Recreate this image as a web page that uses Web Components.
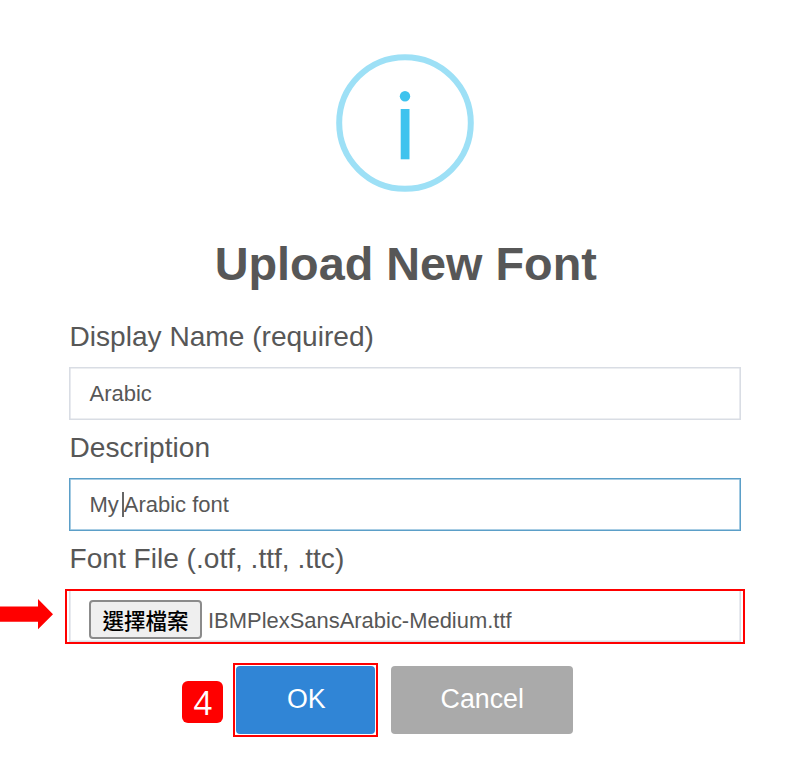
<!DOCTYPE html>
<html lang="zh-Hant">
<head>
<meta charset="utf-8">
<title>Upload New Font</title>
<style>
  body { margin: 0; background: #fff; font-family: "Liberation Sans", Arial, "Noto Sans CJK TC", sans-serif; overflow: hidden; }
</style>
</head>
<body>
<font-dialog>
  <info-icon slot="icon"></info-icon>
  <span slot="title">Upload New Font</span>
  <form-field label="Display Name (required)">Arabic</form-field>
  <form-field label="Description" active>My<text-caret></text-caret> Arabic font</form-field>
  <form-field label="Font File (.otf, .ttf, .ttc)" file><file-picker button="選擇檔案">IBMPlexSansArabic-Medium.ttf</file-picker><pointer-frame></pointer-frame></form-field>
  <dialog-button slot="actions" kind="ok">OK<step-mark>4</step-mark></dialog-button>
  <dialog-button slot="actions" kind="cancel">Cancel</dialog-button>
</font-dialog>
<script>
const define = (name, html) => {
  const template = document.createElement('template');
  template.innerHTML = html;
  customElements.define(name, class extends HTMLElement {
    constructor() {
      super();
      this.attachShadow({ mode: 'open' }).append(template.content.cloneNode(true));
    }
    connectedCallback() {
      this.shadowRoot.querySelectorAll('[data-text]').forEach(el => {
        el.textContent = this.getAttribute(el.dataset.text);
      });
    }
  });
};

define('font-dialog', `
  <style>
    :host { display: flex; flex-direction: column; box-sizing: border-box; width: 792px; height: 761px; padding: 54px 51.5px 0 69px; color: #575757; background: #fff; }
    header { display: flex; flex-direction: column; align-items: center; }
    h1 { margin: 44px 0 16px; padding-left: 2px; font-size: 46.8px; line-height: 57px; font-weight: 700; white-space: nowrap; }
    footer { display: flex; justify-content: center; gap: 16px; padding-top: 24px; }
  </style>
  <header><slot name="icon"></slot><h1><slot name="title"></slot></h1></header>
  <main><slot></slot></main>
  <footer><slot name="actions"></slot></footer>`);

define('info-icon', `
  <style>:host { display: block; width: 138px; height: 138px; } svg { display: block; }</style>
  <svg width="138" height="138" viewBox="0 0 138 138">
    <circle cx="69" cy="69" r="65.8" fill="none" stroke="#9de0f6" stroke-width="6"/>
    <circle cx="69" cy="42.3" r="5.2" fill="#3fc3ee"/>
    <path d="M64.7 55h8.8v50.3h-8.8z" fill="#3fc3ee"/>
  </svg>`);

define('form-field', `
  <style>
    :host { display: block; height: 111px; }
    label { display: block; height: 58px; line-height: 55px; padding-left: .5px; font-size: 28.1px; white-space: nowrap; }
    .box { position: relative; display: flex; align-items: center; box-sizing: border-box; height: 53px; padding: 0 19.5px; border: 1.5px solid #d9dde4; box-shadow: inset 0 0 0 .6px #d9dde4; font-size: 22px; white-space: pre; }
    :host([active]) .box { border-color: #5b9fc8; box-shadow: inset 0 0 0 .8px #8cbddb; }
    .value { position: relative; }
    :host([file]) .value { position: static; }
  </style>
  <label data-text="label"></label>
  <div class="box"><div class="value"><slot></slot></div></div>`);

define('text-caret', `
  <style>:host { position: absolute; left: 32.5px; top: 0; width: 2px; height: 25px; background: #666; }</style>`);

define('file-picker', `
  <style>
    :host { display: flex; align-items: center; gap: 6px; padding-top: 8px; margin-left: -.5px; }
    button { box-sizing: border-box; width: 113px; height: 39px; padding: 0; border: 2px solid #8b8b8b; border-radius: 4px; background: #efefef; color: #000; font: 500 21.5px/34px "Noto Sans CJK TC", sans-serif; }
    span { padding-top: 2px; font-size: 21.95px; }
  </style>
  <button type="button" data-text="button"></button><span><slot></slot></span>`);

define('pointer-frame', `
  <style>
    :host { position: absolute; left: -5px; top: -1px; box-sizing: border-box; width: 680px; height: 55px; border: 2px solid #f00; }
    svg { position: absolute; left: -67px; top: 8px; }
  </style>
  <svg width="54" height="31" viewBox="0 0 54 31"><path d="M0 7.5H38V0L53 15.2L38 30.3V22.7H0Z" fill="#f00"/></svg>`);

define('dialog-button', `
  <style>
    :host { position: relative; display: block; box-sizing: border-box; height: 68px; border-radius: 4px; color: #fff; font-size: 26.8px; line-height: 66px; text-align: center; text-indent: 1px; }
    :host([kind=ok]) { width: 139px; background: #3085d6; }
    :host([kind=cancel]) { width: 182px; background: #aaa; text-indent: 0; }
  </style>
  <slot></slot>`);

define('step-mark', `
  <style>
    :host { position: absolute; left: -3px; top: -3px; box-sizing: border-box; width: 145px; height: 74px; border: 2px solid #f00; text-indent: 0; }
    span { position: absolute; left: -53px; top: 16px; width: 41px; height: 42px; border-radius: 6px; background: #f00; font: 32.5px/43px "Open Sans", sans-serif; }
  </style>
  <span><slot></slot></span>`);
</script>
</body>
</html>
